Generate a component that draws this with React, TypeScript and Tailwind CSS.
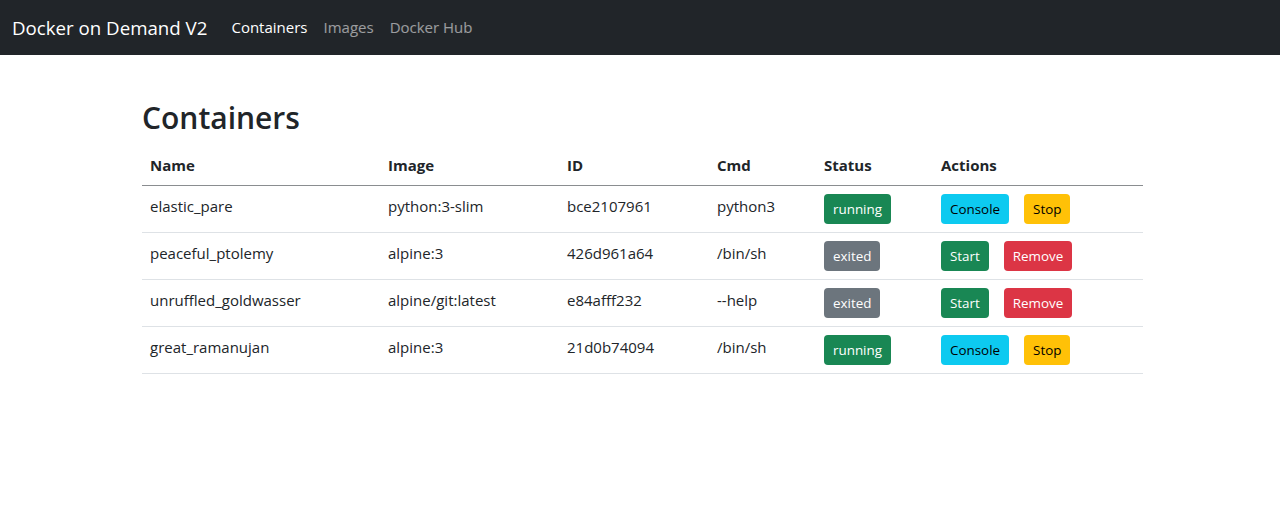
const rows = [
  { name: 'elastic_pare', image: 'python:3-slim', id: 'bce2107961', cmd: 'python3', running: true },
  { name: 'peaceful_ptolemy', image: 'alpine:3', id: '426d961a64', cmd: '/bin/sh', running: false },
  { name: 'unruffled_goldwasser', image: 'alpine/git:latest', id: 'e84afff232', cmd: '--help', running: false },
  { name: 'great_ramanujan', image: 'alpine:3', id: '21d0b74094', cmd: '/bin/sh', running: true },
];

function Btn({ className, children }: { className: string; children: React.ReactNode }) {
  return (
    <button className={`h-[30px] rounded-[4px] px-[9px] text-[13.4px] leading-[20px] ${className}`}>{children}</button>
  );
}

export default function App() {
  return (
    <div className="min-h-[520px] bg-white text-[#212529] font-['Open_Sans',sans-serif]">
      <nav className="flex h-[55px] items-center bg-[#212529] px-3">
        <a className="mr-4 text-[18.7px] leading-[30px] text-white">Docker on Demand V2</a>
        <a className="px-2 text-[15px] text-white">Containers</a>
        <a className="px-2 text-[15px] text-white/55">Images</a>
        <a className="px-2 text-[15px] text-white/55">Docker Hub</a>
      </nav>
      <main className="ml-[142px] w-[1001px] pt-[44px]">
        <h2 className="mb-2 text-[30px] font-semibold leading-[38px]">Containers</h2>
        <table className="w-full border-collapse text-[15px] leading-6">
          <thead>
            <tr className="border-b-[1.5px] border-[#8a8d90] text-left">
              <th className="w-[238px] p-2 font-bold">Name</th>
              <th className="w-[179px] p-2 font-bold">Image</th>
              <th className="w-[150px] p-2 font-bold">ID</th>
              <th className="w-[107px] p-2 font-bold">Cmd</th>
              <th className="w-[117px] p-2 font-bold">Status</th>
              <th className="p-2 font-bold">Actions</th>
            </tr>
          </thead>
          <tbody>
            {rows.map((r) => (
              <tr key={r.id} className="border-b border-[#dee2e6] align-top">
                <td className="px-2 pt-[8px] pb-2">{r.name}</td>
                <td className="px-2 pt-[8px] pb-2">{r.image}</td>
                <td className="px-2 pt-[8px] pb-2">{r.id}</td>
                <td className="px-2 pt-[8px] pb-2">{r.cmd}</td>
                <td className="p-2">
                  {r.running ? (
                    <Btn className="bg-[#198754] text-white">running</Btn>
                  ) : (
                    <Btn className="bg-[#6c757d] text-white">exited</Btn>
                  )}
                </td>
                <td className="p-2">
                  <div className="flex gap-[15px]">
                    {r.running ? (
                      <>
                        <Btn className="bg-[#0dcaf0] text-black">Console</Btn>
                        <Btn className="bg-[#ffc107] text-black">Stop</Btn>
                      </>
                    ) : (
                      <>
                        <Btn className="bg-[#198754] text-white">Start</Btn>
                        <Btn className="bg-[#dc3545] text-white">Remove</Btn>
                      </>
                    )}
                  </div>
                </td>
              </tr>
            ))}
          </tbody>
        </table>
      </main>
    </div>
  );
}
